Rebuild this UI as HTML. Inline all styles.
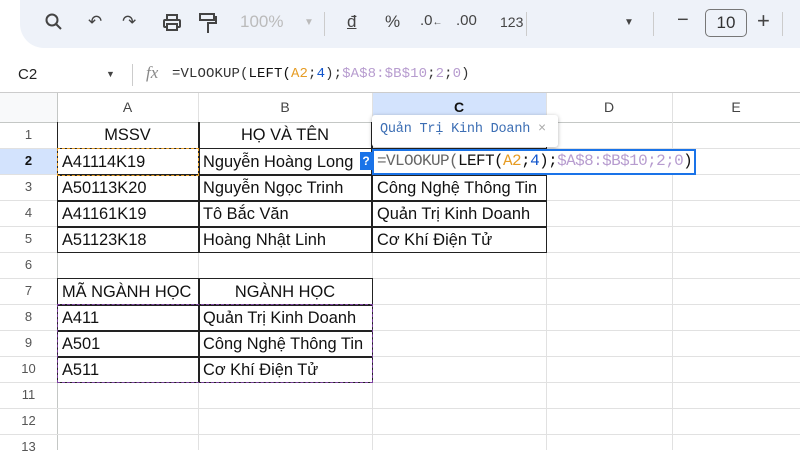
<!DOCTYPE html>
<html><head><meta charset="utf-8"><style>
*{margin:0;padding:0;box-sizing:border-box}
body{width:800px;height:450px;overflow:hidden;background:#fff;font-family:"Liberation Sans",sans-serif;position:relative}
.a{position:absolute}
.tb{left:20px;top:0;width:800px;height:48px;background:#eef2f9;border-radius:0 0 0 24px}
.ic{position:absolute;top:12px;font-size:17px;color:#444}
.vl{position:absolute;background:#e1e1e1;width:1px}
.hl{position:absolute;background:#e1e1e1;height:1px;left:0;width:800px}
.rh{position:absolute;left:0;width:57px;height:26px;text-align:center;line-height:26px;font-size:13px;color:#555}
.ch{position:absolute;top:93px;height:29px;line-height:29px;text-align:center;font-size:14px;color:#444}
.c{position:absolute;height:26px;line-height:26px;font-size:16.4px;color:#111;padding-left:4px;white-space:nowrap;overflow:hidden}
.mono{font-family:"Liberation Mono",monospace}
</style></head><body>
<div class="a tb"></div>
<svg class="a" style="left:44px;top:12px" width="20" height="20"><circle cx="8" cy="8" r="5.5" stroke="#444" stroke-width="2" fill="none"/><line x1="12" y1="12" x2="17" y2="17" stroke="#444" stroke-width="2"/></svg>
<div class="ic" style="left:88px">↶</div>
<div class="ic" style="left:122px">↷</div>
<svg class="a" style="left:162px;top:13px" width="22" height="20"><rect x="5" y="2" width="10" height="5" fill="none" stroke="#444" stroke-width="2"/><rect x="2" y="7" width="16" height="7" rx="1" fill="none" stroke="#444" stroke-width="2"/><rect x="5" y="11" width="10" height="6" fill="#eef2f9" stroke="#444" stroke-width="2"/></svg>
<svg class="a" style="left:198px;top:12px" width="20" height="22"><rect x="2" y="2" width="14" height="6" fill="none" stroke="#444" stroke-width="2"/><path d="M16 5h2v6h-8v10" fill="none" stroke="#444" stroke-width="2"/></svg>
<div class="ic" style="left:240px;color:#bbb">100%</div>
<div class="ic" style="left:304px;color:#bbb;font-size:10px;top:17px">▼</div>
<div class="a" style="left:324px;top:12px;width:1px;height:24px;background:#ccc"></div>
<div class="ic" style="left:347px;text-decoration:underline">đ</div>
<div class="ic" style="left:385px">%</div>
<div class="ic" style="left:420px;font-size:15px">.0<span style="font-size:10px">←</span></div>
<div class="ic" style="left:456px;font-size:15px">.00</div>
<div class="ic" style="left:500px;font-size:14px;top:14px">123</div>
<div class="a" style="left:526px;top:12px;width:1px;height:24px;background:#ccc"></div>
<div class="ic" style="left:624px;font-size:10px;top:17px">▼</div>
<div class="a" style="left:653px;top:12px;width:1px;height:24px;background:#ccc"></div>
<div class="ic" style="left:677px;font-size:20px;top:9px">−</div>
<div class="a" style="left:705px;top:9px;width:42px;height:28px;border:1px solid #777;border-radius:5px;text-align:center;line-height:26px;font-size:17px;color:#333">10</div>
<div class="ic" style="left:757px;font-size:22px;top:8px">+</div>
<div class="a" style="left:782px;top:12px;width:1px;height:24px;background:#ccc"></div>

<div class="a" style="left:18px;top:66px;font-size:15px;color:#222">C2</div>
<div class="a" style="left:106px;top:69px;font-size:9px;color:#444">▼</div>
<div class="a" style="left:132px;top:64px;width:1px;height:22px;background:#ccc"></div>
<div class="a" style="left:146px;top:63px;font-size:17px;font-style:italic;color:#888;font-family:'Liberation Serif',serif">fx</div>
<div class="a mono" style="left:172px;top:66px;font-size:14px;color:#333;letter-spacing:0.1px">=VLOOKUP(<span style="color:#111">LEFT(</span><span style="color:#e69c24">A2</span>;<span style="color:#1155cc">4</span>);<span style="color:#b79ccf">$A$8:$B$10</span>;<span style="color:#b79ccf">2</span>;<span style="color:#b79ccf">0</span>)</div>

<div class="hl" style="top:92px;background:#ccc"></div>
<div class="a" style="left:0;top:93px;width:57px;height:29px;background:#f8f9fa"></div>
<div class="a" style="left:372px;top:93px;width:174px;height:29px;background:#d3e3fd"></div>
<div class="a" style="left:0;top:148px;width:57px;height:26px;background:#d3e3fd"></div>
<div class="hl" style="top:122px;background:#c4c7c5"></div>
<div class="vl" style="left:57px;top:93px;height:357px;background:#c4c7c5"></div>
<div class="vl" style="left:198px;top:93px;height:357px"></div>
<div class="vl" style="left:372px;top:93px;height:357px"></div>
<div class="vl" style="left:546px;top:93px;height:357px"></div>
<div class="vl" style="left:672px;top:93px;height:357px"></div>
<div class="hl" style="top:148px"></div><div class="hl" style="top:174px"></div><div class="hl" style="top:200px"></div><div class="hl" style="top:226px"></div><div class="hl" style="top:252px"></div><div class="hl" style="top:278px"></div><div class="hl" style="top:304px"></div><div class="hl" style="top:330px"></div><div class="hl" style="top:356px"></div><div class="hl" style="top:382px"></div><div class="hl" style="top:408px"></div><div class="hl" style="top:434px"></div>

<div class="ch" style="left:57px;width:141px">A</div>
<div class="ch" style="left:198px;width:174px">B</div>
<div class="ch" style="left:372px;width:174px;color:#111;font-weight:bold">C</div>
<div class="ch" style="left:546px;width:126px">D</div>
<div class="ch" style="left:672px;width:128px">E</div>

<div class="rh" style="top:122px">1</div><div class="rh" style="top:148px;font-weight:bold;color:#111">2</div><div class="rh" style="top:174px">3</div><div class="rh" style="top:200px">4</div><div class="rh" style="top:226px">5</div><div class="rh" style="top:252px">6</div><div class="rh" style="top:278px">7</div><div class="rh" style="top:304px">8</div><div class="rh" style="top:330px">9</div><div class="rh" style="top:356px">10</div><div class="rh" style="top:382px">11</div><div class="rh" style="top:408px">12</div><div class="rh" style="top:434px">13</div>

<div class="a" style="left:57px;top:122px;width:490px;height:131px;border:1px solid #222;border-top:none"></div>
<div class="a" style="left:57px;top:148px;width:490px;height:1px;background:#222"></div>
<div class="a" style="left:57px;top:174px;width:490px;height:2px;background:#222"></div>
<div class="a" style="left:57px;top:200px;width:490px;height:2px;background:#222"></div>
<div class="a" style="left:57px;top:226px;width:490px;height:2px;background:#222"></div>
<div class="a" style="left:198px;top:122px;width:2px;height:131px;background:#222"></div>
<div class="a" style="left:371px;top:122px;width:2px;height:131px;background:#222"></div>

<div class="c" style="left:57px;top:122px;width:141px;text-align:center;padding:0">MSSV</div>
<div class="c" style="left:198px;top:122px;width:174px;text-align:center;padding:0">HỌ VÀ TÊN</div>
<div class="c" style="left:58px;top:149px">A41114K19</div>
<div class="c" style="left:199px;top:149px">Nguyễn Hoàng Long</div>
<div class="c" style="left:58px;top:175px">A50113K20</div>
<div class="c" style="left:199px;top:175px">Nguyễn Ngọc Trinh</div>
<div class="c" style="left:373px;top:175px">Công Nghệ Thông Tin</div>
<div class="c" style="left:58px;top:201px">A41161K19</div>
<div class="c" style="left:199px;top:201px">Tô Bắc Văn</div>
<div class="c" style="left:373px;top:201px">Quản Trị Kinh Doanh</div>
<div class="c" style="left:58px;top:227px">A51123K18</div>
<div class="c" style="left:199px;top:227px">Hoàng Nhật Linh</div>
<div class="c" style="left:373px;top:227px">Cơ Khí Điện Tử</div>
<div class="a" style="left:57px;top:148px;width:142px;height:28px;border:1.5px dashed #e69c24"></div>

<div class="a" style="left:57px;top:278px;width:316px;height:105px;border:1px solid #222"></div>
<div class="a" style="left:57px;top:304px;width:316px;height:2px;background:#222"></div>
<div class="a" style="left:57px;top:330px;width:316px;height:2px;background:#222"></div>
<div class="a" style="left:57px;top:356px;width:316px;height:2px;background:#222"></div>
<div class="a" style="left:198px;top:278px;width:2px;height:105px;background:#222"></div>
<div class="a" style="left:57px;top:304px;width:316px;height:79px;border:1.5px dashed #7b3f9e"></div>
<div class="c" style="left:58px;top:279px">MÃ NGÀNH HỌC</div>
<div class="c" style="left:198px;top:279px;width:174px;text-align:center;padding:0">NGÀNH HỌC</div>
<div class="c" style="left:58px;top:305px">A411</div><div class="c" style="left:199px;top:305px">Quản Trị Kinh Doanh</div>
<div class="c" style="left:58px;top:331px">A501</div><div class="c" style="left:199px;top:331px">Công Nghệ Thông Tin</div>
<div class="c" style="left:58px;top:357px">A511</div><div class="c" style="left:199px;top:357px">Cơ Khí Điện Tử</div>

<div class="a" style="left:372px;top:115px;width:186px;height:32px;background:#fff;box-shadow:0 1px 4px rgba(0,0,0,.3);border-radius:3px"></div>
<div class="a mono" style="left:380px;top:122px;font-size:13.5px;color:#3c6eb4;letter-spacing:-0.2px">Quản Trị Kinh Doanh <span style="color:#aaa">×</span></div>
<div class="a" style="left:360px;top:152px;width:12px;height:18px;background:#1a73e8;color:#fff;font-size:12px;font-weight:bold;text-align:center;line-height:18px">?</div>
<div class="a" style="left:372px;top:149px;width:324px;height:26px;border:2px solid #1a73e8;background:#fff"></div>
<div class="a mono" style="left:377px;top:152px;font-size:16px;color:#666;letter-spacing:-0.6px">=VLOOKUP(<span style="color:#111">LEFT(</span><span style="color:#e69c24">A2</span><span style="color:#111">;</span><span style="color:#1155cc">4</span><span style="color:#111">);</span><span style="color:#b79ccf">$A$8:$B$10;2;0</span><span style="color:#111">)</span></div>
</body></html>
